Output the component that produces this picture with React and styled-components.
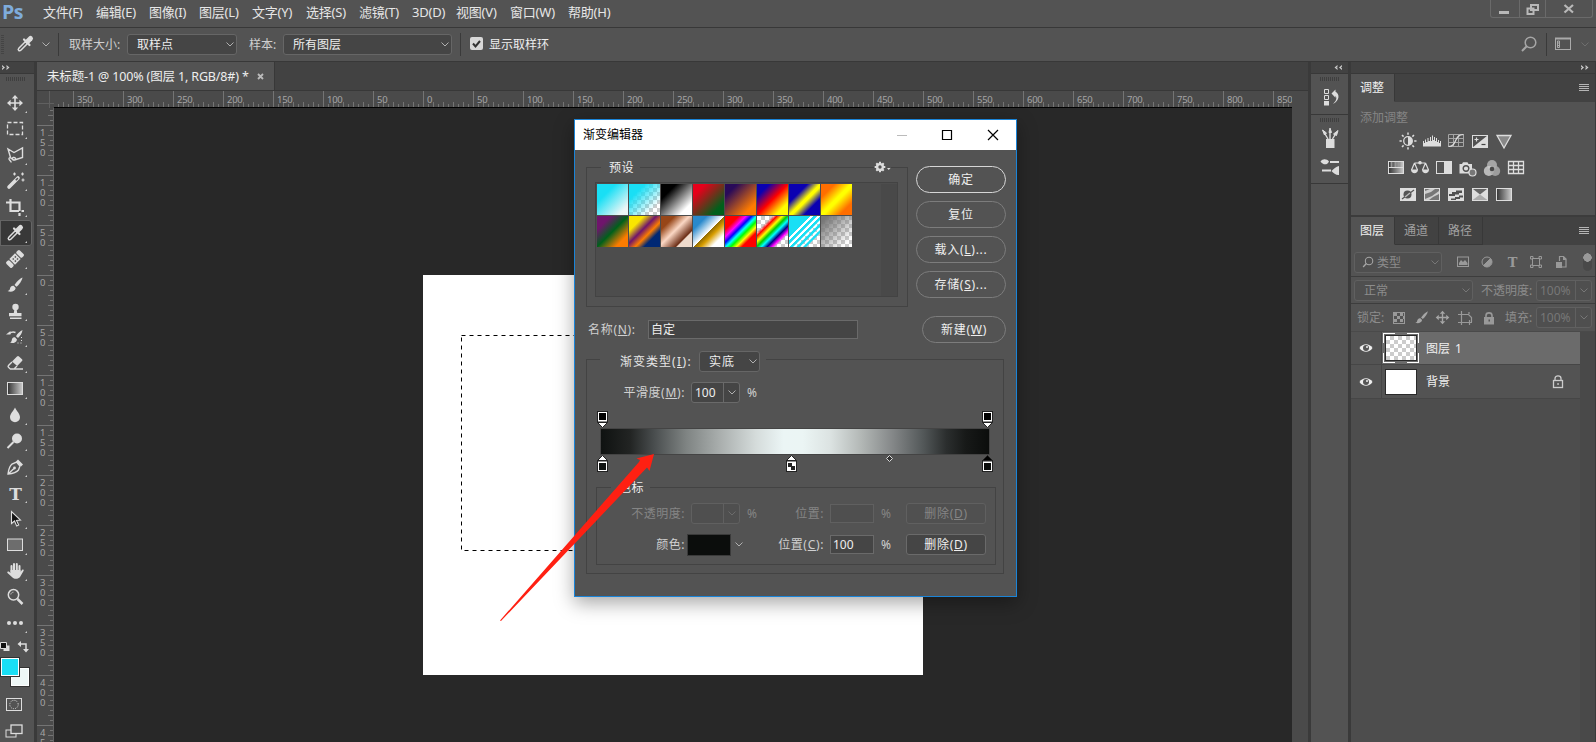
import React from "react";
import styled, { createGlobalStyle, css } from "styled-components";

const MENUS = [
  { label: "文件(F)", w: 53 },
  { label: "编辑(E)", w: 53 },
  { label: "图像(I)", w: 50 },
  { label: "图层(L)", w: 53 },
  { label: "文字(Y)", w: 54 },
  { label: "选择(S)", w: 53 },
  { label: "滤镜(T)", w: 53 },
  { label: "3D(D)", w: 44 },
  { label: "视图(V)", w: 54 },
  { label: "窗口(W)", w: 58 },
  { label: "帮助(H)", w: 60 },
];

const range = (from, to) => {
  const list = [];
  for (let v = from; v <= to; v += 50) list.push(String(Math.abs(v)));
  return list;
};

const CHECK =
  "repeating-conic-gradient(#ccc 0 25%, #fff 0 50%) 0 0 / 8px 8px";

const PRESETS = [
  "linear-gradient(135deg, #19dff5 30%, #edf6f6 85%)",
  `linear-gradient(135deg, #19dff5 25%, rgba(25,223,245,0) 80%), ${CHECK}`,
  "linear-gradient(135deg, #000 25%, #fff 80%)",
  "linear-gradient(135deg, #e6001b 20%, #00601b 80%)",
  "linear-gradient(135deg, #290a59 20%, #ff7c00 80%)",
  "linear-gradient(135deg, #0a00b2 20%, #ff0000 50%, #fffc00 80%)",
  "linear-gradient(135deg, #0a00b2 30%, #fffc00 50%, #fffc00 55%, #0a00b2 74%)",
  "linear-gradient(135deg, #ff6e00 22%, #ffff00 48%, #ffff00 54%, #ff6e00 80%)",
  "linear-gradient(135deg, #6f156c 22%, #00601b 50%, #fd7c00 80%)",
  "linear-gradient(135deg, #f9e600 24%, #6f156c 44%, #fd7c00 60%, #002874 74%)",
  "linear-gradient(135deg, #974618 22%, #fbd8c5 46%, #6c2e16 73%, #efdbcd 76%)",
  "linear-gradient(135deg, #2989cc 22%, #fff 50%, #906a00 51%, #d99f00 62%, #fff 80%)",
  "linear-gradient(135deg, #f00 22%, #f0f 34%, #00f 43%, #0ff 51%, #0f0 59%, #ff0 68%, #f00 77%)",
  `linear-gradient(135deg, transparent 25%, #f00 32%, #ff0 41%, #0c0 49%, #0ff 57%, #008 66%, #f0f 74%, transparent 80%), ${CHECK}`,
  `linear-gradient(135deg, #19dff5 34%, #fff 35% 39%, #19dff5 40% 45%, #fff 46% 50%, #19dff5 51% 56%, transparent 57% 61%, #19dff5 62% 67%, transparent 68% 72%, #19dff5 73% 77%, transparent 78%), ${CHECK}`,
  `linear-gradient(135deg, #777 10%, rgba(150,150,150,0) 85%), ${CHECK}`,
];

/* icons, drawn on a 20 x 20 grid */

const ICONS = {
  move: (
    <>
      <path d="M10 5v10M5 10h10" stroke="#ddd" strokeWidth="1.6" />
      <path d="M10 2l3.2 3.6H6.800zM10 18l3.200-3.600H6.800zM2 10l3.600-3.200v6.400zM18 10l-3.600-3.200v6.400z" fill="#ddd" />
    </>
  ),
  marquee: <rect x="2.500" y="3.500" width="15" height="12" fill="none" stroke="#ddd" strokeWidth="1.300" strokeDasharray="4 2" />,
  lasso: <path d="M5.500 12.500L3 4l6 3.500L17.500 3v9.500L9.500 15c-1 .3-2.300-.2-2.300-1.300s2-1.900 3-.7-.4 2.600-2 1.600S4.500 11.500 4 13.500s2 1.500 2.200 4" fill="none" stroke="#ddd" strokeWidth="1.400" />,
  wand: (
    <>
      <path d="M4 16l9-9" stroke="#ddd" strokeWidth="3.600" strokeLinecap="round" />
      <path d="M10.800 9.200l2.100-2.100" stroke="#555" strokeWidth="1.600" />
      <path d="M9.500 1.500v3M8 3h3M17.500 1.500v3M16 3h3M18 7.500v3M16.500 9h3" stroke="#ddd" strokeWidth="1.200" />
    </>
  ),
  crop: <path d="M1 5.500h13.500V14M5.500 2v12H14M16.500 14H19M14.500 16v3" fill="none" stroke="#ddd" strokeWidth="2.200" />,
  eyedropper: (
    <>
      <path d="M10.500 7.500l-6.700 6.700c-1.500 1.600.5 3.600 2 2l6.700-6.700z" fill="none" stroke="#ddd" strokeWidth="1.500" />
      <path d="M9 5.500l5.500 5.500" stroke="#ddd" strokeWidth="2.200" strokeLinecap="round" />
      <path d="M12.500 7.500l3-3" stroke="#ddd" strokeWidth="5" strokeLinecap="round" />
    </>
  ),
  heal: (
    <g transform="rotate(-45 10 10)">
      <rect x="0.500" y="6" width="4.500" height="8" rx="1.500" fill="#ddd" />
      <rect x="15" y="6" width="4.500" height="8" rx="1.500" fill="#ddd" />
      <rect x="6" y="6" width="8" height="8" fill="#ddd" />
      <path d="M8 8h1.500v1.500H8zM11 8h1.500v1.500H11zM8 11h1.500v1.500H8zM11 11h1.500v1.500H11z" fill="#555" />
    </g>
  ),
  brush: (
    <>
      <path d="M17.500 2.500c-3 1.300-6.500 5-8 7.500l2 1.800c2.500-2 5.500-6 6-9.300z" fill="#ddd" />
      <path d="M8.700 10.800c-2.500-.3-3.500 1.600-3.800 3.200-.2 1.200-1.200 1.700-2.400 2 3 1.300 7.500.7 8.200-3z" fill="#ddd" />
    </>
  ),
  stamp: (
    <>
      <circle cx="10.500" cy="6" r="3.200" fill="#ddd" />
      <path d="M9.400 8h2.200l.6 4h4.300v3.300H4V12h4.800zM5 16.600h11.500V18H5z" fill="#ddd" />
    </>
  ),
  history: (
    <>
      <path d="M17.500 3c-3 1.300-5 3.700-6.500 6.200l2 1.800c2.200-2 4.200-4.700 4.500-8zM10 10.200c-2.500-.3-3 1.600-3.300 3.200-.2 1.200-1 1.900-2.200 2.200 2.600 1 7 .5 7.500-3.200z" fill="#ddd" />
      <path d="M1 7.500L5.500 4v3.500z" fill="#ddd" />
      <path d="M4.500 6.500c2-1.800 4-1.800 6-1" fill="none" stroke="#ddd" strokeWidth="1.400" />
      <path d="M16.500 10v6h-5" fill="none" stroke="#ddd" strokeDasharray="1 2" />
    </>
  ),
  eraser: (
    <>
      <path d="M7 8.500l5-5c.7-.7 1.400-.7 2 0L17 6.300c.6.6.6 1.200 0 1.800l-4.800 4.900z" fill="#ddd" />
      <path d="M7 9l-3.500 3.500c-.6.700-.5 1.300 0 1.800l1.700 1.600h3.800l3-3M5 16h13" fill="none" stroke="#ddd" strokeWidth="1.400" />
    </>
  ),
  gradient: <rect x="2.500" y="3.500" width="15" height="12" fill="url(#toolRamp)" stroke="#ddd" />,
  drop: <path d="M10 2.500c1.500 3.500 5 6 5 9.800a5 5 0 01-10 0C5 8.500 8.500 6 10 2.500z" fill="#ddd" />,
  dodge: (
    <>
      <circle cx="12" cy="7.500" r="5" fill="#ddd" />
      <path d="M8.500 11l-6 6" stroke="#ddd" strokeWidth="2" />
    </>
  ),
  pen: (
    <>
      <path d="M3 17c.5-4 1.500-8 4-10l4.500-2 3.500 4-1.500 4c-2 2.500-6 3.500-10.500 4zM3 17l6-5.500" fill="none" stroke="#ddd" strokeWidth="1.400" />
      <circle cx="9.500" cy="11" r="1.400" fill="#ddd" />
      <path d="M11 4.500l2-2 5 5-2 2z" fill="#ddd" />
    </>
  ),
  arrow: <path d="M6.500 2.500v12l3-2.500 2.200 5 2-1-2.200-4.500 4-.5z" fill="#111" stroke="#ddd" strokeWidth="1.100" />,
  rect: <rect x="2.500" y="4" width="15" height="11.500" fill="#6d6d6d" stroke="#ddd" />,
  hand: (
    <>
      <path d="M6.500 11V5M9 10V3M11.800 10V3M14.500 11V5" stroke="#ddd" strokeWidth="2" strokeLinecap="round" />
      <path d="M5.500 9h10v2l1.500-2c1-1 2.200 0 1.500 1l-3.500 6c-1.500 2.300-6 2.300-7.500.5L2.500 12c-.8-1.200.6-2 1.600-1.300l1.400 1.200z" fill="#ddd" />
    </>
  ),
  zoom: (
    <>
      <circle cx="8.500" cy="7.800" r="5.200" fill="none" stroke="#ddd" strokeWidth="1.500" />
      <path d="M12.500 12l5 5" stroke="#ddd" strokeWidth="2.500" />
      <path d="M5.800 7.500c.3-1.600 1.400-2.300 2.700-2.300" fill="none" stroke="#bbb" />
    </>
  ),
  dots: (
    <>
      <circle cx="4" cy="10" r="2" fill="#ddd" />
      <circle cx="10" cy="10" r="2" fill="#ddd" />
      <circle cx="16" cy="10" r="2" fill="#ddd" />
    </>
  ),
  search: (
    <>
      <circle cx="11.500" cy="8.500" r="5.300" fill="none" stroke="#a6a6a6" strokeWidth="1.500" />
      <path d="M7.700 12.300L3 17" stroke="#a6a6a6" strokeWidth="2" />
    </>
  ),
  workspace: (
    <>
      <rect x="2.500" y="4.500" width="15" height="11" fill="none" stroke="#aaa" />
      <path d="M2 4.500h16" stroke="#aaa" strokeWidth="2" />
      <path d="M4.500 7v6.500h2V7zM4 9h3M4 11.500h3" fill="none" stroke="#aaa" />
    </>
  ),
  historyPanel: (
    <>
      <path d="M4.500 2.500h4v4h-4zM4.500 8.500h4v4h-4z" fill="none" stroke="#ddd" />
      <path d="M4 14h5v4.500H4zM11.500 6.500l4-4v2.200c4.500 2.500 4.300 9-2.700 12.300 4-3.500 4.200-6 2.700-8.200v2z" fill="#ddd" />
    </>
  ),
  brushesPanel: (
    <>
      <path d="M6 11h8.500v9H6z" fill="#ddd" />
      <path d="M8 11L4.500 5M10 11V4M12.500 11L15.500 6" stroke="#ddd" strokeWidth="1.400" />
      <path d="M9 4.500L10 0l1.500 4.500zM2.500 2l4 3-2 2zM18 2.500l-1.500 5-3-1.500z" fill="#ddd" stroke="#ddd" />
    </>
  ),
  presetsPanel: (
    <>
      <path d="M10 5h9M2 13.500h9" stroke="#ddd" strokeWidth="1.800" />
      <path d="M.5 4.500C3 1 7 2 9 4.500 7 8.500 3 8 .5 4.500zM19 9v9c-3 .3-5.500-2-7.500-4 2-2 4.500-4.500 7.500-5z" fill="#ddd" />
    </>
  ),
  brightness: (
    <>
      <circle cx="10" cy="10" r="4.300" fill="none" stroke="#ddd" strokeWidth="1.300" />
      <path d="M10 5.700a4.300 4.300 0 010 8.600z" fill="#ddd" />
      <path d="M10 1.500v2.300M10 16.200v2.300M1.500 10h2.300M16.200 10h2.300M4 4l1.600 1.600M14.400 14.400L16 16M4 16l1.600-1.600M14.400 5.600L16 4" stroke="#ddd" strokeWidth="1.500" />
    </>
  ),
  levels: <path d="M1 15.500V10h1v2h1V8.500h1V11h1.500V7h1v3H8V6h1v4h1V4.500h1V9h1V6h1v4h1V7h1v4h1V9h1v3h1v-2h1v5.500z" fill="#ddd" />,
  curves: (
    <>
      <path d="M2.500 3.500h15v12h-15zM7.500 3.500v12M12.500 3.500v12M2.500 7.500h15M2.500 11.500h15" fill="none" stroke="#a5a5a5" />
      <path d="M2.500 15.500c9 0 5-12 15-12" fill="none" stroke="#ddd" strokeWidth="1.200" />
    </>
  ),
  exposure: (
    <>
      <rect x="2.500" y="4.500" width="15" height="12" fill="#505050" stroke="#ddd" />
      <path d="M17.500 4.500v12h-15z" fill="#ddd" />
      <path d="M4.500 8.500h4M6.500 6.500v4" stroke="#ddd" strokeWidth="1.200" />
      <path d="M11.500 13.500h4" stroke="#444" strokeWidth="1.200" />
    </>
  ),
  vibrance: <path d="M3 4.500h14L10 17z" fill="#888" stroke="#ddd" strokeWidth="1.300" />,
  hue: (
    <>
      <rect x="2.500" y="3.500" width="15" height="12" fill="url(#toolRamp)" stroke="#ddd" />
      <path d="M3 9.500h14" stroke="#ddd" />
      <path d="M5.500 4v5M9.500 4v5M13.500 4v5" stroke="#999" strokeWidth="1.700" />
    </>
  ),
  balance: (
    <>
      <path d="M4.500 5h11M10 3v2M4.500 5l-3 7M4.500 5l3 7M15.500 5l-3 7M15.500 5l3 7" fill="none" stroke="#ddd" strokeWidth="1.200" />
      <path d="M1 11.500h7c0 5-7 5-7 0zM12 11.500h7c0 5-7 5-7 0z" fill="#ddd" />
      <circle cx="10" cy="4.800" r="1.800" fill="#ddd" />
    </>
  ),
  blackWhite: (
    <>
      <rect x="2.500" y="3.500" width="15" height="12" fill="none" stroke="#ddd" />
      <path d="M10 3.500h7.500v12H10z" fill="#ddd" />
    </>
  ),
  photo: (
    <>
      <path d="M1.500 6H4l1-1.700h4.500L10.500 6H14v9.500H1.500z" fill="#ddd" />
      <circle cx="8" cy="10.500" r="2.800" fill="#ddd" stroke="#505050" strokeWidth="1.400" />
      <circle cx="14.500" cy="14.500" r="3.500" fill="#777" stroke="#ddd" strokeWidth="1.200" />
    </>
  ),
  mixer: (
    <>
      <circle cx="10" cy="7" r="5" fill="#a5a5a5" />
      <circle cx="6.800" cy="13" r="5" fill="#ccc" fillOpacity=".85" />
      <circle cx="13.200" cy="13" r="5" fill="#aaa" fillOpacity=".85" />
      <circle cx="10" cy="11" r="2.300" fill="#484848" />
    </>
  ),
  lookup: <path d="M2.500 3.500h15v12h-15zM7.500 3.500v12M12.500 3.500v12M2.500 7.500h15M2.500 11.500h15" fill="none" stroke="#ddd" strokeWidth="1.300" />,
  invert: (
    <>
      <rect x="2" y="3" width="16" height="13" fill="#ddd" />
      <circle cx="9.500" cy="9.500" r="4" fill="#555" />
      <path d="M4 14L16 5" stroke="#555" strokeWidth="1.200" />
      <path d="M7 12L12 8" stroke="#bbb" strokeWidth="1.500" />
    </>
  ),
  posterize: (
    <>
      <rect x="2.500" y="3.500" width="15" height="12" fill="#777" stroke="#ddd" />
      <path d="M3 9L9 7l4-3H8L3 6zM3 14l7-3 7-5v3l-6 3-4 3H3z" fill="#ccc" />
    </>
  ),
  threshold: (
    <>
      <rect x="2" y="3" width="16" height="13" fill="#ddd" />
      <path d="M3 9h3V7h4V5.500h6V8h-3v1.500H9V11H3zM5 15v-1.500h4V12h4v-1.500h4v2h-3V14h-4v1z" fill="#505050" />
    </>
  ),
  selective: (
    <>
      <rect x="2.500" y="3.500" width="15" height="12" fill="#666" stroke="#ddd" />
      <path d="M3 15h14l-7-6z" fill="#aaa" />
      <path d="M3 4l7 5.500L3 15zM17 4l-7 5.500 7 5.500z" fill="#ddd" />
    </>
  ),
  ramp: <rect x="2.500" y="3.500" width="15" height="12" fill="url(#toolRamp)" stroke="#ddd" />,
  image: (
    <>
      <rect x="4.500" y="5" width="11" height="9.500" fill="none" stroke="#999" />
      <path d="M6 13v-2l2-3 2 2 2-2 2.500 3v2z" fill="#999" />
    </>
  ),
  adjust: (
    <>
      <circle cx="10" cy="10" r="5" fill="#555" stroke="#999" />
      <path d="M13.500 6.500A5 5 0 016.500 13.500z" fill="#999" stroke="#999" />
    </>
  ),
  shape: <path d="M6.500 6.500h7v7h-7zM4.500 4.500h2.500v2.500H4.500zM13 4.500h2.500v2.500H13zM4.500 13h2.500v2.500H4.500zM13 13h2.500v2.500H13z" fill="none" stroke="#999" />,
  smart: (
    <>
      <path d="M8.500 9V4.500h4l2.500 2.500v8h-4" fill="none" stroke="#999" strokeWidth="1.200" />
      <path d="M5 10h6v6H5zM12 4v4h3.500z" fill="#999" />
    </>
  ),
  lockPixels: (
    <>
      <rect x="4.500" y="4.500" width="11" height="11" fill="none" stroke="#999" />
      <path d="M5 5h3v3H5zM11 5h3v3h-3zM8 8h3v3H8zM5 11h3v3H5zM11 11h3v3h-3zM14 8h1.500v3H14z" fill="#999" />
    </>
  ),
  artboard: <path d="M3 6.500h3M6.500 3v14M6.500 6.500h7l3 3V14M3 14.500h14M14.500 12v5M14 6v-2" fill="none" stroke="#999" strokeWidth="1.200" />,
  lock: (
    <>
      <path d="M5 9h10v7.500H5z" fill="#999" />
      <path d="M7 9V7.500c0-3.500 6-3.500 6 0V9" fill="none" stroke="#999" strokeWidth="1.600" />
      <path d="M9.500 11.500h1.500v2H9.500z" fill="#555" />
    </>
  ),
  lockOpen: (
    <>
      <rect x="5.500" y="8.500" width="9" height="7" fill="none" stroke="#ccc" strokeWidth="1.300" />
      <path d="M7 8.500V6.500c0-3.500 6-3.500 6 0v2" fill="none" stroke="#ccc" strokeWidth="1.300" />
      <path d="M9.300 11.200h1.500v1.500H9.300z" fill="#ddd" />
    </>
  ),
  eye: (
    <>
      <path d="M3.500 10c3-5 10-5 13 0-3 5-10 5-13 0z" fill="#eee" />
      <circle cx="10" cy="10" r="3" fill="#555" />
      <circle cx="11" cy="9" r="1" fill="#eee" />
    </>
  ),
  gear: (
    <>
      <circle cx="10" cy="10" r="2.900" fill="none" stroke="#ddd" strokeWidth="2.400" />
      <path d="M10 4.700v2M10 13.300v2M4.700 10h2M13.300 10h2M6.300 6.300l1.400 1.400M12.300 12.300l1.400 1.400M6.300 13.700l1.400-1.400M12.300 7.700l1.400-1.400" stroke="#ddd" strokeWidth="2" />
    </>
  ),
};

const LetterT = ({ color = "#ddd", size = 17 }) => (
  <text x="10.500" y={10.500 + size * 0.36} textAnchor="middle" fontFamily="DejaVu Serif, serif" fontWeight="700" fontSize={size} fill={color}>
    T
  </text>
);

const Icon = ({ name, size = 20, dim }) => (
  <IconSvg viewBox="0 0 20 20" $size={size} $dim={dim} aria-hidden="true">
    {ICONS[name]}
  </IconSvg>
);

const TOOLS = [
  "move", "marquee", "lasso", "wand", "crop", "eyedropper", "heal", "brush", "stamp", "history", "eraser",
  "gradient", "drop", "dodge", "pen", "type", "arrow", "rect", "hand", "zoom", "dots",
];

const ADJUSTMENTS = [
  ["brightness", "levels", "curves", "exposure", "vibrance"],
  ["hue", "balance", "blackWhite", "photo", "mixer", "lookup"],
  ["invert", "posterize", "threshold", "selective", "ramp"],
];

const Chevron = ({ color = "#b0b0b0" }) => (
  <ChevronSvg viewBox="0 0 8 5">
    <path d="M.5 .5L4 4 7.500 .5" fill="none" stroke={color} />
  </ChevronSvg>
);

const DoubleArrow = ({ left }) => (
  <ArrowsSvg viewBox="0 0 8 5" $left={left}>
    <path d="M0 0l3 2.500L0 5zM4.500 0l3 2.500-3 2.500z" fill="#ccc" />
    <path d="M0 1.500l1 1-1 1zM4.500 1.500l1 1-1 1z" fill="#424242" />
  </ArrowsSvg>
);

const Key = ({ k }) => (
  <Latin>
    (<u>{k}</u>)
  </Latin>
);

const ColorStop = ({ at, color, down, active, hidden }) => (
  <StopSvg viewBox="0 0 11 17" $at={at} $down={down}>
    {down ? (
      <>
        <path d="M.5 11.500h10L5.500 16.500z" fill="#fff" stroke="#222" />
        <rect x=".5" y=".5" width="10" height="10.500" fill="#fff" stroke="#222" />
        <rect x="2" y="2" width="7" height="7" fill={color} />
      </>
    ) : (
      <>
        <path d="M.5 5.500h10L5.500 .5z" fill={active ? "#000" : "#fff"} stroke="#222" />
        <rect x=".5" y="6" width="10" height="10.500" fill="#fff" stroke="#222" />
        {hidden ? (
          <path d="M2 8h4v4H2zM5 11h4v4H5z" fill="#222" />
        ) : (
          <rect x="2" y="8" width="7" height="7" fill={color} />
        )}
      </>
    )}
  </StopSvg>
);

const MenuBar = () => (
  <MenuRow>
    <Logo>Ps</Logo>
    {MENUS.map((m) => (
      <MenuItem key={m.label} $w={m.w}>
        {m.label}
      </MenuItem>
    ))}
    <WindowButtons>
      <WindowButton $w={28}>
        <svg width="12" height="14">
          <path d="M0 10.500h10" stroke="#b8b8b8" strokeWidth="3" />
        </svg>
      </WindowButton>
      <WindowButton $w={26}>
        <svg width="14" height="14">
          <path d="M5 3h7v5H5zM1.500 6.500h6V12h-6z" fill="#535353" stroke="#b8b8b8" strokeWidth="2" />
        </svg>
      </WindowButton>
      <WindowButton $w={47}>
        <svg width="12" height="14">
          <path d="M1.500 3l8.500 7.500M10 3l-8.500 7.500" stroke="#b8b8b8" strokeWidth="2.200" />
        </svg>
      </WindowButton>
    </WindowButtons>
  </MenuRow>
);

const OptionsBar = () => (
  <OptionsRow>
    <SideGrip />
    <EyedropperSlot>
      <Icon name="eyedropper" />
    </EyedropperSlot>
    <Chevron />
    <Divider $ml={8} $mr={10} />
    <OptionLabel $w={58}>取样大小:</OptionLabel>
    <Select $w={110} $h={21}>
      <span>取样点</span>
      <Chevron />
    </Select>
    <OptionLabel $w={34} $ml={12}>
      样本:
    </OptionLabel>
    <Select $w={169} $h={21}>
      <span>所有图层</span>
      <Chevron />
    </Select>
    <Divider $ml={8} $mr={9} />
    <Checkbox>
      <svg width="13" height="13">
        <path d="M3 6.500l2.500 3L10 4" fill="none" stroke="#333" strokeWidth="2" />
      </svg>
    </Checkbox>
    <CheckLabel>显示取样环</CheckLabel>
    <OptionsRight>
      <Icon name="search" />
      <Divider $ml={7} $mr={6} />
      <Icon name="workspace" />
      <FadedSlot>
        <Chevron color="#6e6e6e" />
      </FadedSlot>
    </OptionsRight>
  </OptionsRow>
);

const Toolbar = () => (
  <ToolColumn>
    <ColumnHeader>
      <DoubleArrow />
    </ColumnHeader>
    <Grip $mt={3} $mb={9} $ml={6} />
    {TOOLS.map((name) => (
      <Tool key={name} $active={name === "eyedropper"} $plain={name === "zoom"}>
        {name === "type" ? (
          <IconSvg viewBox="0 0 20 20" $size={20}>
            <LetterT />
          </IconSvg>
        ) : (
          <Icon name={name} />
        )}
      </Tool>
    ))}
    <SwapRow>
      <svg width="11" height="12">
        <path d="M3.500 4.500h6v5.500h-6z" fill="#ddd" />
        <path d="M.5 1.500h6v6h-6z" fill="#111" stroke="#ddd" />
      </svg>
      <svg width="12" height="12">
        <path d="M3 3h6v6" fill="none" stroke="#ddd" strokeWidth="1.500" />
        <path d="M4 0v6L.5 3zM6 8h6l-3 3.500z" fill="#ddd" />
      </svg>
    </SwapRow>
    <ColorWell>
      <ColorChip $back />
      <ColorChip />
    </ColorWell>
    <ModeButton $h={27}>
      <svg width="20" height="20">
        <rect x="2.500" y="4.500" width="15" height="12" fill="none" stroke="#ddd" />
        <circle cx="10" cy="10.500" r="4.200" fill="none" stroke="#ddd" strokeDasharray="1 1.200" />
      </svg>
    </ModeButton>
    <ModeButton $h={27}>
      <svg width="20" height="20">
        <rect x="2" y="9" width="10" height="7" fill="none" stroke="#ddd" />
        <rect x="7" y="4" width="11" height="8.500" fill="#535353" stroke="#ddd" strokeWidth="1.300" />
      </svg>
    </ModeButton>
  </ToolColumn>
);

const GradientEditor = () => (
  <Dialog>
    <TitleBar>
      渐变编辑器
      <TitleIcons viewBox="0 0 102 12">
        <path d="M0 6.500h10" stroke="#bbb" />
        <path d="M45.500 1.500h9v9h-9z" fill="none" stroke="#000" strokeWidth="1.200" />
        <path d="M91 1l10 10M101 1L91 11" stroke="#000" strokeWidth="1.200" />
      </TitleIcons>
    </TitleBar>
    <DialogTop>
      <PresetGroup>
        <Legend $ml={6} $h={17}>
          预设
        </Legend>
        <GearButton>
          <Icon name="gear" size={20} />
          <svg width="4" height="12">
            <path d="M0 7h3.500L1.700 9z" fill="#ddd" />
          </svg>
        </GearButton>
        <PresetList>
          <PresetGrid>
            {PRESETS.map((bg) => (
              <Preset key={bg} $bg={bg} />
            ))}
          </PresetGrid>
          <ScrollTrack />
        </PresetList>
      </PresetGroup>
      <DialogButtons>
        <Pill $primary>确定</Pill>
        <Pill>复位</Pill>
        <Pill>
          载入
          <Key k="L" />
          ...
        </Pill>
        <Pill>
          存储
          <Key k="S" />
          ...
        </Pill>
      </DialogButtons>
    </DialogTop>
    <NameRow>
      <span>
        名称
        <Key k="N" />:
      </span>
      <Field $w={210}>自定</Field>
      <Pill $w={84}>
        新建
        <Key k="W" />
      </Pill>
    </NameRow>
    <TypeGroup>
      <TypeLegend>
        <span>
          渐变类型
          <Key k="I" />:
        </span>
        <Select $w={61} $h={21}>
          <span>实底</span>
          <Chevron />
        </Select>
      </TypeLegend>
      <FormRow $mt={11}>
        <FormLabel $w={98}>
          平滑度
          <Key k="M" />:
        </FormLabel>
        <Slot>
          <Combo>
            <b>100</b>
            <i>
              <Chevron />
            </i>
          </Combo>
          <Percent>%</Percent>
        </Slot>
      </FormRow>
      <Ramp>
        <ColorStop down at={-4} color="#000" />
        <ColorStop down at={381} color="#000" />
        <ColorStop at={-4} color="#101312" />
        <ColorStop at={185} hidden />
        <ColorStop at={381} color="#0b0d0c" active />
        <Midpoint viewBox="0 0 7 7">
          <path d="M3.500 .5l3 3-3 3-3-3z" fill="#333" stroke="#ddd" />
        </Midpoint>
      </Ramp>
      <StopsGroup>
        <Legend $ml={14} $h={17}>
          色标
        </Legend>
        <FormRow $mt={7} $off>
          <FormLabel $w={88}>不透明度:</FormLabel>
          <Slot>
            <Combo $off>
              <b />
              <i>
                <Chevron color="#6b6b6b" />
              </i>
            </Combo>
            <Percent>%</Percent>
          </Slot>
          <FormLabel $w={64}>位置:</FormLabel>
          <Field $w={44} $ml={6} $off />
          <Percent>%</Percent>
          <DeleteButton $off>
            删除
            <Key k="D" />
          </DeleteButton>
        </FormRow>
        <FormRow $mt={10}>
          <FormLabel $w={88}>颜色:</FormLabel>
          <Slot $tight>
            <ColorBox />
            <Chevron />
          </Slot>
          <FormLabel $w={64}>
            位置
            <Key k="C" />:
          </FormLabel>
          <Field $w={44} $ml={6}>
            100
          </Field>
          <Percent>%</Percent>
          <DeleteButton>
            删除
            <Key k="D" />
          </DeleteButton>
        </FormRow>
      </StopsGroup>
    </TypeGroup>
  </Dialog>
);

const Workspace = () => (
  <DocumentArea>
    <TabStrip>
      <DocTab>
        <span>未标题-1 @ 100% (图层 1, RGB/8#) *</span>
        <svg width="7" height="7">
          <path d="M1 1l5 5M6 1L1 6" stroke="#bbb" strokeWidth="1.800" />
        </svg>
      </DocTab>
    </TabStrip>
    <RulerRow>
      <RulerCorner />
      <HRuler>
        {range(-400, 850).map((v, i) => (
          <HMark key={i}>{i > 0 && v}</HMark>
        ))}
      </HRuler>
    </RulerRow>
    <CanvasRow>
      <VRuler>
        {range(-200, 450).map((v, i) => (
          <VMark key={i}>
            {i > 0 && v.split("").map((d, n) => <span key={n}>{d}</span>)}
          </VMark>
        ))}
      </VRuler>
      <Pasteboard>
        <Artboard>
          <Selection>
            <rect x=".5" y=".5" width="300" height="215" fill="none" stroke="#000" strokeDasharray="4 4" />
          </Selection>
        </Artboard>
      </Pasteboard>
      <VScroll />
    </CanvasRow>
  </DocumentArea>
);

const PanelMenu = () => (
  <MenuLines width="10" height="8">
    <path d="M0 .5h10M0 2.500h10M0 4.500h10M0 6.500h10" stroke="#b5b5b5" />
  </MenuLines>
);

const IconStrip = () => (
  <Strip>
    <ColumnHeader $right>
      <DoubleArrow left />
    </ColumnHeader>
    <StripGroup $h={41}>
      <Grip $mt={3} $mb={6} $ml={9} />
      <Icon name="historyPanel" />
    </StripGroup>
    <StripGroup $h={69}>
      <Grip $mt={3} $mb={6} $ml={9} />
      <Icon name="brushesPanel" />
      <StripGap />
      <Icon name="presetsPanel" />
    </StripGroup>
  </Strip>
);

const Panels = () => (
  <PanelColumn>
    <ColumnHeader $right>
      <DoubleArrow />
    </ColumnHeader>
    <PanelTabs>
      <PanelTab $active>调整</PanelTab>
      <PanelMenu />
    </PanelTabs>
    <AdjustPanel>
      <AdjustTitle>添加调整</AdjustTitle>
      {ADJUSTMENTS.map((row) => (
        <AdjustRow key={row[0]}>
          {row.map((name) => (
            <Icon key={name} name={name} />
          ))}
        </AdjustRow>
      ))}
    </AdjustPanel>
    <PanelTabs>
      <PanelTab $active>图层</PanelTab>
      <PanelTab>通道</PanelTab>
      <PanelTab>路径</PanelTab>
      <PanelMenu />
    </PanelTabs>
    <LayerBar $h={32} $pt={3}>
      <Select $w={88} $h={21} $off $search>
        <Icon name="search" size={14} />
        <span>类型</span>
        <Chevron color="#777" />
      </Select>
      <FilterIcons>
        <Icon name="image" />
        <Icon name="adjust" />
        <IconSvg viewBox="0 0 20 20" $size={20}>
          <LetterT color="#999" size={13} />
        </IconSvg>
        <Icon name="shape" />
        <Icon name="smart" />
      </FilterIcons>
      <Toggle />
    </LayerBar>
    <LayerBar $h={27}>
      <Select $w={119} $h={21} $off>
        <span>正常</span>
        <Chevron color="#777" />
      </Select>
      <LayerLabel $w={55} $ml={8}>
        不透明度:
      </LayerLabel>
      <Combo $off $wide>
        <b>100%</b>
        <i>
          <Chevron color="#777" />
        </i>
      </Combo>
    </LayerBar>
    <LayerBar $h={28} $last>
      <LayerLabel $w={32} $ml={3}>
        锁定:
      </LayerLabel>
      <LockIcons>
        <Icon name="lockPixels" />
        <Icon name="brush" size={17} dim />
        <Icon name="move" size={17} dim />
        <Icon name="artboard" />
        <Icon name="lock" />
      </LockIcons>
      <LayerLabel $w={31}>填充:</LayerLabel>
      <Combo $off $wide>
        <b>100%</b>
        <i>
          <Chevron color="#777" />
        </i>
      </Combo>
    </LayerBar>
    <LayerArea>
      <LayerList>
        <Layer $active>
          <EyeCell>
            <Icon name="eye" />
          </EyeCell>
          <ThumbFrame $framed>
            <Thumb $clear />
          </ThumbFrame>
          <span>图层 1</span>
        </Layer>
        <Layer>
          <EyeCell>
            <Icon name="eye" />
          </EyeCell>
          <ThumbFrame>
            <Thumb />
          </ThumbFrame>
          <span>背景</span>
          <LockSlot>
            <Icon name="lockOpen" />
          </LockSlot>
        </Layer>
      </LayerList>
      <LayerScroll />
    </LayerArea>
  </PanelColumn>
);

const App = () => {
  return (
    <Window>
      <GlobalStyle />
      <Defs>
        <defs>
          <linearGradient id="toolRamp">
            <stop offset="0" stopColor="#333" />
            <stop offset="1" stopColor="#ccc" />
          </linearGradient>
        </defs>
      </Defs>
      <MenuBar />
      <OptionsBar />
      <Main>
        <Toolbar />
        <Workspace />
        <IconStrip />
        <Panels />
      </Main>
      <GradientEditor />
      <Pointer viewBox="0 0 160 172">
        <path d="M2 170.500L141 12l1-2-3.500-1.500L156 4l-4.500 17-2.500-3.500L3 171z" fill="#ff2012" />
      </Pointer>
    </Window>
  );
};

const GlobalStyle = createGlobalStyle`
  * {
    box-sizing: border-box;
  }

  body {
    margin: 0;
    overflow: hidden;
    background: #535353;
  }

  svg {
    flex: none;
    display: block;
  }
`;

const Window = styled.div`
  width: 1596px;
  height: 742px;
  position: relative;
  overflow: hidden;
  display: flex;
  flex-direction: column;
  background: #535353;
  color: #e6e6e6;
  font-family: "Noto Sans", "Noto Sans CJK SC", sans-serif;
  font-size: 12px;
  line-height: 16px;
  white-space: nowrap;
`;

const Defs = styled.svg`
  position: absolute;
  width: 0;
  height: 0;
`;

const IconSvg = styled.svg`
  width: ${(p) => p.$size}px;
  height: ${(p) => p.$size}px;
  opacity: ${(p) => (p.$dim ? 0.6 : 1)};
`;

const ChevronSvg = styled.svg`
  width: 8px;
  height: 5px;
`;

const ArrowsSvg = styled.svg`
  width: 8px;
  height: 5px;
  transform: ${(p) => (p.$left ? "scaleX(-1)" : "none")};
`;

const Latin = styled.span`
  letter-spacing: 0.7px;

  u {
    text-underline-offset: 1px;
  }
`;

/* top bars */

const MenuRow = styled.div`
  height: 28px;
  flex: none;
  display: flex;
  border-bottom: 1px solid #383838;
`;

const Logo = styled.div`
  width: 43px;
  padding-left: 2px;
  font-family: "Open Sans", sans-serif;
  font-size: 19.5px;
  font-weight: 700;
  line-height: 24px;
  letter-spacing: -0.5px;
  color: #7facdb;
`;

const MenuItem = styled.div`
  width: ${(p) => p.$w}px;
  font-size: 13px;
  line-height: 24px;
  letter-spacing: -0.2px;
`;

const WindowButtons = styled.div`
  height: 18px;
  margin-left: auto;
  margin-right: 3px;
  display: flex;
  border: 1px solid #6a6a6a;
  border-top: none;
  border-radius: 0 0 3px 3px;
`;

const WindowButton = styled.div`
  width: ${(p) => p.$w}px;
  display: flex;
  align-items: center;
  justify-content: center;

  & + & {
    border-left: 1px solid #6a6a6a;
  }
`;

const OptionsRow = styled.div`
  height: 34px;
  flex: none;
  display: flex;
  align-items: center;
  padding-bottom: 1px;
  border-bottom: 1px solid #383838;
`;

const SideGrip = styled.div`
  width: 3px;
  height: 19px;
  margin-left: 1px;
  background: repeating-linear-gradient(#444 0 1px, transparent 1px 2px);
`;

const EyedropperSlot = styled.div`
  margin: 0 7px 0 11px;
`;

const Divider = styled.div`
  width: 1px;
  height: 23px;
  margin: 0 ${(p) => p.$mr}px 0 ${(p) => p.$ml}px;
  background: #3a3a3a;
`;

const OptionLabel = styled.div`
  width: ${(p) => p.$w}px;
  margin-left: ${(p) => p.$ml || 0}px;
  padding-top: 2px;
  color: #cfcfcf;
`;

const Select = styled.div`
  width: ${(p) => p.$w}px;
  height: ${(p) => p.$h}px;
  flex: none;
  display: flex;
  align-items: center;
  justify-content: space-between;
  padding: 0 2px 0 9px;
  background: #454545;
  border: 1px solid #666;
  border-radius: 3px;
  color: #eee;

  span {
    padding-top: 1px;
  }

  ${(p) =>
    p.$off &&
    css`
      background: #4f4f4f;
      border-color: #606060;
      color: #8c8c8c;
    `}

  ${(p) =>
    p.$search &&
    css`
      padding-left: 6px;
      justify-content: flex-start;
      gap: 2px;

      svg:last-child {
        margin-left: auto;
      }
    `}
`;

const Checkbox = styled.div`
  width: 13px;
  height: 13px;
  margin-top: -1px;
  background: #d8d8d8;
  border-radius: 2px;
`;

const CheckLabel = styled.div`
  margin-left: 6px;
  padding-top: 2px;
  color: #eee;
`;

const OptionsRight = styled.div`
  margin-left: auto;
  margin-right: 7px;
  display: flex;
  align-items: center;
`;

const FadedSlot = styled.div`
  margin-left: 8px;
`;

const Main = styled.div`
  flex: 1;
  min-height: 0;
  display: flex;
`;

/* tools */

const ToolColumn = styled.div`
  width: 37px;
  flex: none;
  border-right: 3px solid #3a3a3a;
  display: flex;
  flex-direction: column;
`;

const ColumnHeader = styled.div`
  height: 12px;
  flex: none;
  display: flex;
  align-items: center;
  justify-content: ${(p) => (p.$right ? "flex-end" : "flex-start")};
  padding: 0 6px 0 2px;
  background: #424242;
  border-bottom: 1px solid #383838;
`;

const Grip = styled.div`
  width: 19px;
  height: 4px;
  flex: none;
  margin: ${(p) => p.$mt}px 0 ${(p) => p.$mb}px ${(p) => p.$ml}px;
  background: repeating-linear-gradient(90deg, #3f3f3f 0 1px, transparent 1px 2px);
`;

const Tool = styled.div`
  width: 32px;
  height: 26px;
  flex: none;
  display: flex;
  align-items: center;
  padding-left: 5px;
  position: relative;
  border-radius: 0 3px 3px 0;
  background: ${(p) => (p.$active ? "#383838" : "none")};
  box-shadow: ${(p) => (p.$active ? "inset 0 0 0 1px #656565" : "none")};

  &::after {
    content: "";
    display: ${(p) => (p.$plain ? "none" : "block")};
    position: absolute;
    left: 25px;
    bottom: 3px;
    border: 1.5px solid transparent;
    border-right-color: #ccc;
    border-bottom-color: #ccc;
  }
`;

const SwapRow = styled.div`
  height: 20px;
  flex: none;
  display: flex;
  justify-content: space-between;
  align-items: center;
  padding: 1px 5px 0 0;
`;

const ColorWell = styled.div`
  width: 31px;
  height: 34px;
  flex: none;
  position: relative;
`;

const ColorChip = styled.div`
  position: absolute;
  width: 20px;
  height: 20px;
  left: ${(p) => (p.$back ? 10 : 0)}px;
  top: ${(p) => (p.$back ? 11 : 1)}px;
  background: ${(p) => (p.$back ? "#eef7f6" : "#19dff5")};
  border: 1px solid #333;
  box-shadow: inset 0 0 0 1px #fff;
`;

const ModeButton = styled.div`
  height: ${(p) => p.$h}px;
  flex: none;
  display: flex;
  align-items: center;
  padding-left: 4px;
`;

/* document */

const DocumentArea = styled.div`
  flex: 1;
  min-width: 0;
  display: flex;
  flex-direction: column;
`;

const TabStrip = styled.div`
  height: 29px;
  flex: none;
  display: flex;
  background: #424242;
  border-bottom: 1px solid #383838;
`;

const DocTab = styled.div`
  width: 238px;
  display: flex;
  align-items: center;
  justify-content: space-between;
  padding: 0 10px;
  background: #535353;
  border-right: 1px solid #383838;
  font-size: 12.5px;
  letter-spacing: -0.15px;
  color: #eee;

  span {
    padding-top: 2px;
  }
`;

const RulerRow = styled.div`
  height: 17px;
  flex: none;
  display: flex;
  background: #4a4a4a;
`;

const RulerCorner = styled.div`
  width: 17px;
  flex: none;
  background: linear-gradient(90deg, transparent 12px, #777 12px 13px, transparent 13px),
    linear-gradient(transparent 12px, #777 12px 13px, transparent 13px);
  opacity: 0.5;
`;

const HRuler = styled.div`
  width: 1238px;
  flex: none;
  overflow: hidden;
  display: flex;
  border-bottom: 1px solid #000;
`;

const HMark = styled.div`
  width: 50px;
  flex: none;
  padding-left: 3px;
  border-left: 1px solid #747474;
  background: repeating-linear-gradient(90deg, transparent 0 9px, #747474 9px 10px) 0 100% / 100% 5px no-repeat,
    repeating-linear-gradient(90deg, transparent 0 4px, #747474 4px 5px) 0 100% / 100% 3px no-repeat;
  font-size: 9.5px;
  line-height: 16px;
  letter-spacing: -0.3px;
  padding-top: 1px;
  color: #a5a5a5;

  &:first-child {
    margin-left: -31px;
  }
`;

const CanvasRow = styled.div`
  flex: 1;
  min-height: 0;
  display: flex;
`;

const VRuler = styled.div`
  width: 17px;
  flex: none;
  overflow: hidden;
  background: #4a4a4a;
  border-right: 1px solid #626262;
`;

const VMark = styled.div`
  height: 50px;
  padding: 2px 0 0 3px;
  display: flex;
  flex-direction: column;
  border-top: 1px solid #747474;
  background: repeating-linear-gradient(transparent 0 9px, #747474 9px 10px) 100% 0 / 5px 100% no-repeat,
    repeating-linear-gradient(transparent 0 4px, #747474 4px 5px) 100% 0 / 3px 100% no-repeat;
  font-size: 9.5px;
  line-height: 10px;
  color: #a5a5a5;

  &:first-child {
    margin-top: -33px;
  }
`;

const Pasteboard = styled.div`
  flex: 1;
  position: relative;
  overflow: hidden;
  background: #282828;
`;

const Artboard = styled.div`
  position: absolute;
  left: 369px;
  top: 167px;
  width: 500px;
  height: 400px;
  background: #fff;
`;

const Selection = styled.svg`
  position: absolute;
  left: 38px;
  top: 60px;
  width: 301px;
  height: 216px;
`;

const VScroll = styled.div`
  width: 16px;
  flex: none;
  background: #4a4a4a;
`;

/* dialog */

const Dialog = styled.div`
  position: absolute;
  left: 574px;
  top: 119px;
  width: 443px;
  height: 478px;
  background: #535353;
  border: 1px solid #1a84d8;
  box-shadow: 0 6px 18px rgba(0, 0, 0, 0.35);
`;

const TitleBar = styled.div`
  height: 30px;
  display: flex;
  align-items: center;
  justify-content: space-between;
  padding: 0 17px 0 8px;
  background: #fff;
  color: #000;
`;

const TitleIcons = styled.svg`
  width: 102px;
  height: 12px;
  margin-top: -1px;
`;

const DialogTop = styled.div`
  display: flex;
  padding: 9px 10px 0 11px;
`;

const Group = styled.fieldset`
  margin: 0;
  padding: 0;
  min-width: 0;
  border: 1px solid #434343;
`;

const PresetGroup = styled(Group)`
  width: 322px;
  height: 148px;
  padding: 6px 0 0 8px;
  position: relative;
`;

const Legend = styled.legend`
  height: ${(p) => p.$h}px;
  margin-left: ${(p) => p.$ml}px;
  padding: 0 6px 0 8px;
  line-height: ${(p) => p.$h}px;
  letter-spacing: 0.5px;
  color: #eee;
`;

const GearButton = styled.div`
  position: absolute;
  right: 16px;
  top: -19px;
  height: 20px;
  width: 21px;
  display: flex;
  align-items: center;
  background: linear-gradient(90deg, transparent 4px, #535353 4px);

  svg + svg {
    margin-left: -3px;
  }
`;

const PresetList = styled.div`
  width: 303px;
  height: 115px;
  display: flex;
  justify-content: space-between;
  padding: 1px 0 0 1px;
  background: #4d4d4d;
  border: 1px solid #434343;
`;

const PresetGrid = styled.div`
  display: grid;
  grid-template-columns: repeat(8, 31px);
  grid-auto-rows: 31px;
  gap: 1px;
`;

const Preset = styled.div`
  background: ${(p) => p.$bg};
`;

const ScrollTrack = styled.div`
  width: 16px;
  background: #494949;
`;

const DialogButtons = styled.div`
  display: flex;
  flex-direction: column;
  gap: 8px;
  margin: 7px 0 0 8px;
`;

const Pill = styled.div`
  width: ${(p) => p.$w || 90}px;
  height: 27px;
  display: flex;
  align-items: center;
  justify-content: center;
  border: 1px solid ${(p) => (p.$primary ? "#d6d6d6" : "#7c7c7c")};
  border-radius: 14px;
  color: #eee;
  letter-spacing: 0.7px;
`;

const NameRow = styled.div`
  height: 27px;
  display: flex;
  align-items: center;
  justify-content: space-between;
  margin: 9px 10px 0 13px;
  color: #d0d0d0;

  > span {
    width: 60px;
    letter-spacing: 0.7px;
  }

  ${Pill} {
    margin-left: auto;
  }
`;

const Field = styled.div`
  width: ${(p) => p.$w}px;
  height: 19px;
  flex: none;
  margin-left: ${(p) => p.$ml || 0}px;
  padding-left: 2px;
  line-height: 18px;
  background: ${(p) => (p.$off ? "#4f4f4f" : "#454545")};
  border: 1px solid ${(p) => (p.$off ? "#606060" : "#6a6a6a")};
  color: #eee;
`;

const TypeGroup = styled(Group)`
  height: 226px;
  margin: 5px 12px 0 11px;
`;

const TypeLegend = styled.legend`
  height: 23px;
  margin-left: 13px;
  padding: 3px 6px 0 20px;
  display: flex;
  align-items: center;

  > span {
    width: 79px;
    padding-top: 1px;
    letter-spacing: 1px;
  }

  ${Latin} {
    letter-spacing: 1.4px;
  }

  ${Select} {
    margin-bottom: -1px;
    letter-spacing: 0.9px;
  }
`;

const FormRow = styled.div`
  height: 21px;
  margin-top: ${(p) => p.$mt}px;
  display: flex;
  align-items: center;
  color: ${(p) => (p.$off ? "#858585" : "#d0d0d0")};
`;

const FormLabel = styled.div`
  width: ${(p) => p.$w}px;
  flex: none;
  text-align: right;
  letter-spacing: 0.5px;
`;

const Slot = styled.div`
  width: 75px;
  flex: none;
  display: flex;
  align-items: center;
  gap: ${(p) => (p.$tight ? 4 : 0)}px;
  padding-left: ${(p) => (p.$tight ? 2 : 6)}px;
`;

const Combo = styled.div`
  width: ${(p) => (p.$wide ? 56 : 49)}px;
  height: 21px;
  flex: none;
  display: flex;
  background: ${(p) => (p.$off ? "#4f4f4f" : "#454545")};
  border: 1px solid ${(p) => (p.$off ? "#606060" : "#6a6a6a")};
  border-radius: 3px;
  color: ${(p) => (p.$off ? "#777" : "#eee")};

  b {
    flex: 1;
    padding-left: 3px;
    font-weight: 400;
    line-height: 19px;
  }

  i {
    width: 16px;
    display: flex;
    align-items: center;
    justify-content: center;
    border-left: 1px solid ${(p) => (p.$off ? "#606060" : "#6a6a6a")};
  }
`;

const Percent = styled.div`
  width: 14px;
  flex: none;
  margin-left: 7px;
`;

const Ramp = styled.div`
  width: 390px;
  height: 27px;
  margin: 25px 0 0 13px;
  position: relative;
  border: 1px solid #444;
  background: linear-gradient(
    90deg,
    #0f1211 0%,
    #222423 7.5%,
    #484c4d 13.5%,
    #7f8483 22%,
    #abb0af 31%,
    #d5dcdb 40%,
    #ebf5f5 47%,
    #ebf5f4 52%,
    #dce3e2 59%,
    #b3b8b6 67%,
    #858889 75%,
    #535859 83%,
    #2b2e2e 89%,
    #171918 94%,
    #0b0d0c 100%
  );
`;

const StopSvg = styled.svg`
  position: absolute;
  left: ${(p) => p.$at}px;
  top: ${(p) => (p.$down ? -18 : 26)}px;
  width: 11px;
  height: 17px;
`;

const Midpoint = styled.svg`
  position: absolute;
  left: 285px;
  top: 26px;
  width: 7px;
  height: 7px;
`;

const StopsGroup = styled(Group)`
  width: 400px;
  height: 86px;
  margin: 24px 0 0 9px;
`;

const DeleteButton = styled.div`
  width: 80px;
  height: 21px;
  flex: none;
  margin-left: 11px;
  display: flex;
  align-items: center;
  justify-content: center;
  border: 1px solid ${(p) => (p.$off ? "#606060" : "#6a6a6a")};
  border-radius: 3px;
  background: ${(p) => (p.$off ? "#505050" : "#454545")};
  color: ${(p) => (p.$off ? "#858585" : "#eee")};
  letter-spacing: 0.7px;
`;

const ColorBox = styled.div`
  width: 44px;
  height: 22px;
  background: #0b0d0c;
  border: 1px solid #3a3a3a;
`;

const Pointer = styled.svg`
  position: absolute;
  left: 498px;
  top: 450px;
  width: 160px;
  height: 172px;
`;

/* panels on the right */

const Strip = styled.div`
  width: 41px;
  flex: none;
  border-left: 3px solid #3a3a3a;
  border-right: 1px solid #3a3a3a;
`;

const StripGroup = styled.div`
  height: ${(p) => p.$h}px;
  border-bottom: 1px solid #383838;
  display: flex;
  flex-direction: column;

  > svg {
    margin-left: 9px;
  }
`;

const StripGap = styled.div`
  height: 9px;
  flex: none;
`;

const PanelColumn = styled.div`
  width: 247px;
  flex: none;
  display: flex;
  flex-direction: column;
  border-left: 2px solid #3a3a3a;
  border-right: 1px solid #3a3a3a;
`;

const PanelTabs = styled.div`
  height: 28px;
  flex: none;
  display: flex;
  align-items: stretch;
  background: #424242;
`;

const PanelTab = styled.div`
  width: 44px;
  padding-left: 9px;
  border-right: 1px solid #383838;
  border-bottom: 1px solid ${(p) => (p.$active ? "#535353" : "#383838")};
  background: ${(p) => (p.$active ? "#535353" : "none")};
  color: ${(p) => (p.$active ? "#f0f0f0" : "#a0a0a0")};
  line-height: 27px;
`;

const MenuLines = styled.svg`
  margin: 10px 6px 0 auto;
`;

const AdjustPanel = styled.div`
  height: 115px;
  flex: none;
  padding-top: 8px;
  border-bottom: 2px solid #3c3c3c;
`;

const AdjustTitle = styled.div`
  padding-left: 9px;
  color: #858585;
`;

const AdjustRow = styled.div`
  height: 20px;
  margin-top: 7px;
  display: flex;
  justify-content: center;
  gap: 4px;
  padding-right: 35px;

  &:nth-child(2) {
    margin-top: 5px;
  }
`;

const LayerBar = styled.div`
  height: ${(p) => p.$h}px;
  flex: none;
  display: flex;
  align-items: center;
  padding: ${(p) => p.$pt || 0}px 0 0 3px;
  border-bottom: 1px solid ${(p) => (p.$last ? "#4a4a4a" : "#3d3d3d")};
`;

const FilterIcons = styled.div`
  display: flex;
  gap: 4.4px;
  margin-left: 11px;
`;

const Toggle = styled.div`
  width: 9px;
  height: 18px;
  margin-left: 12px;
  border-radius: 5px;
  background: radial-gradient(circle at 50% 4.5px, #999 4px, #494949 4.5px);
`;

const LayerLabel = styled.div`
  width: ${(p) => p.$w}px;
  flex: none;
  margin-left: ${(p) => p.$ml || 0}px;
  padding-top: 1px;
  color: #8c8c8c;
`;

const LockIcons = styled.div`
  width: 116px;
  flex: none;
  display: flex;
  align-items: center;
  gap: 4px;
`;

const LayerArea = styled.div`
  flex: 1;
  display: flex;
  background: #4d4d4d;
`;

const LayerList = styled.div`
  flex: 1;
`;

const LayerScroll = styled.div`
  width: 15px;
  background: #494949;
`;

const Layer = styled.div`
  height: ${(p) => (p.$active ? 33 : 34)}px;
  display: flex;
  align-items: center;
  background: ${(p) => (p.$active ? "#6b6b6b" : "#535353")};
  border-bottom: 1px solid #464646;
  color: #f0f0f0;

  > span {
    padding-top: 1px;
    word-spacing: 2px;
  }
`;

const EyeCell = styled.div`
  width: 31px;
  height: 100%;
  display: flex;
  align-items: center;
  padding-left: 5px;
  background: #535353;
  border-right: 1px solid #464646;
`;

const ThumbFrame = styled.div`
  width: 36px;
  height: 30px;
  margin: 0 7px 0 1px;
  display: flex;
  align-items: center;
  justify-content: center;

  ${(p) =>
    p.$framed &&
    css`
      background: linear-gradient(#fff, #fff) 0 0 / 12px 1px, linear-gradient(#fff, #fff) 0 0 / 1px 10px,
        linear-gradient(#fff, #fff) 100% 0 / 12px 1px, linear-gradient(#fff, #fff) 100% 0 / 1px 10px,
        linear-gradient(#fff, #fff) 0 100% / 12px 1px, linear-gradient(#fff, #fff) 0 100% / 1px 10px,
        linear-gradient(#fff, #fff) 100% 100% / 12px 1px, linear-gradient(#fff, #fff) 100% 100% / 1px 10px;
      background-repeat: no-repeat;
    `}
`;

const Thumb = styled.div`
  width: 32px;
  height: 26px;
  border: 1px solid #2a2a2a;
  background: ${(p) => (p.$clear ? CHECK : "#fff")};
`;

const LockSlot = styled.div`
  margin-left: auto;
  margin-right: 12px;
`;

export default App;
